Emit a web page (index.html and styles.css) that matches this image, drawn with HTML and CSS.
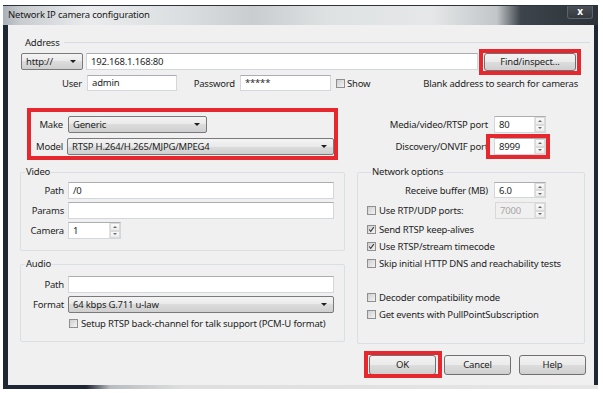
FILE: index.html
```html
<!DOCTYPE html>
<html lang="en">
<head>
    <meta charset="UTF-8">
    <title>Network IP camera configuration</title>
    <link rel="stylesheet" href="styles.css">
</head>
<body>
    <div class="window">
        <div class="titlebar">
            <span class="title">Network IP camera configuration</span>
            <span class="close">x</span>
        </div>

        <div class="client">
            <div class="addr-head">Address</div>

            <div class="addr-row">
                <div class="combo proto">http://</div>
                <div class="field url">192.168.1.168:80</div>
                <div class="btn find">Find/inspect...<span class="mark"></span></div>
            </div>

            <div class="login-row">
                <span class="lbl user-lbl">User</span>
                <div class="field user">admin</div>
                <span class="lbl pass-lbl">Password</span>
                <div class="field pass">*****</div>
                <span class="cb"></span>
                <span class="show">Show</span>
                <span class="hint">Blank address to search for cameras</span>
            </div>

            <div class="columns">
                <div class="col-left">
                    <div class="make-box">
                        <span class="lbl">Make</span>
                        <div class="combo make">Generic</div>
                        <span class="lbl">Model</span>
                        <div class="combo">RTSP H.264/H.265/MJPG/MPEG4</div>
                    </div>

                    <fieldset class="group video">
                        <legend>Video</legend>
                        <div class="form-grid">
                            <span class="lbl">Path</span>
                            <div class="field">/0</div>
                            <span class="lbl">Params</span>
                            <div class="field"></div>
                            <span class="lbl">Camera</span>
                            <div class="spin cam">
                                <span class="val">1</span>
                                <span class="arrows"><i class="up"></i><i class="down"></i></span>
                            </div>
                        </div>
                    </fieldset>

                    <fieldset class="group audio">
                        <legend>Audio</legend>
                        <div class="form-grid">
                            <span class="lbl">Path</span>
                            <div class="field"></div>
                            <span class="lbl">Format</span>
                            <div class="combo">64 kbps G.711 u-law</div>
                        </div>
                        <div class="check-row backchannel">
                            <span class="cb"></span>
                            <span>Setup RTSP back-channel for talk support (PCM-U format)</span>
                        </div>
                    </fieldset>
                </div>

                <div class="col-right">
                    <div class="port-grid">
                        <span class="lbl">Media/video/RTSP port</span>
                        <div class="spin">
                            <span class="val">80</span>
                            <span class="arrows"><i class="up"></i><i class="down"></i></span>
                        </div>
                        <span class="lbl">Discovery/ONVIF port</span>
                        <div class="spin">
                            <span class="val">8999</span>
                            <span class="arrows"><i class="up"></i><i class="down"></i></span>
                            <span class="mark mark-port"></span>
                        </div>
                    </div>

                    <fieldset class="group net">
                        <legend>Network options</legend>
                        <div class="port-grid buffer">
                            <span class="lbl">Receive buffer (MB)</span>
                            <div class="spin">
                                <span class="val">6.0</span>
                                <span class="arrows"><i class="up"></i><i class="down"></i></span>
                            </div>
                        </div>
                        <div class="check-row rtp">
                            <span class="cb"></span>
                            <span>Use RTP/UDP ports:</span>
                            <div class="spin disabled">
                                <span class="val">7000</span>
                                <span class="arrows"><i class="up"></i><i class="down"></i></span>
                            </div>
                        </div>
                        <div class="check-row first">
                            <span class="cb checked"><svg viewBox="0 0 9 9"><polyline points="1.5,4.5 3.5,6.8 7.5,1.5"/></svg></span>
                            <span>Send RTSP keep-alives</span>
                        </div>
                        <div class="check-row">
                            <span class="cb checked"><svg viewBox="0 0 9 9"><polyline points="1.5,4.5 3.5,6.8 7.5,1.5"/></svg></span>
                            <span>Use RTSP/stream timecode</span>
                        </div>
                        <div class="check-row">
                            <span class="cb"></span>
                            <span>Skip initial HTTP DNS and reachability tests</span>
                        </div>
                        <div class="check-row spaced">
                            <span class="cb"></span>
                            <span>Decoder compatibility mode</span>
                        </div>
                        <div class="check-row">
                            <span class="cb"></span>
                            <span>Get events with PullPointSubscription</span>
                        </div>
                    </fieldset>
                </div>
            </div>

            <div class="buttons">
                <div class="btn ok">OK<span class="mark mark-ok"></span></div>
                <div class="btn">Cancel</div>
                <div class="btn">Help</div>
            </div>
        </div>

        <div class="frame-bottom"></div>
    </div>
</body>
</html>
```

FILE: styles.css
```css
* {
    box-sizing: border-box;
}
body {
    margin: 0;
    background-color: #fff;
    font-family: "Noto Sans", "Open Sans", sans-serif;
    font-size: 9.5px;
    letter-spacing: -0.2px;
    color: #1e1e1e;
}
.window {
    width: 595px;
    margin: 5px 0 0 3px;
    padding: 0 4px 0 5px;
    background-color: #1f2634;
}
.titlebar {
    display: flex;
    height: 20px;
    margin: 0 -4px 0 -5px;
    padding-left: 5px;
    border-top: 1px solid #2b3240;
    background: linear-gradient(to right, #a9b0b6 0, #c9cdd0 3%, #e9ebec 14%, #dcdfe1 30%, #c9cdd0 42%, #dfe2e3 55%, #e5e7e8 72%, #c2c6c9 83%, #3d444b 87%, #2c3238 100%);
}
.title {
    line-height: 17px;
    color: #1a1a1a;
}
.close {
    margin-left: auto;
    margin-right: 5px;
    width: 26px;
    height: 13px;
    border: 1px solid #5c636a;
    border-top: none;
    border-radius: 0 0 3px 3px;
    background: linear-gradient(#4a5057, #33393f);
    color: #fff;
    font-weight: bold;
    font-size: 10px;
    line-height: 11px;
    text-align: center;
}
.client {
    height: 360px;
    padding: 10px 8px 0 9px;
    background-color: #f0f0f0;
}
.frame-bottom {
    height: 4px;
    margin: 0 -4px 0 -5px;
    background: linear-gradient(to right, #1f2634 0, #1f2634 14%, #b8bcc0 18%, #dedede 30%, #e6e6e6 100%);
}

/* controls */
.lbl {
    white-space: nowrap;
    text-align: right;
}
.field,
.combo,
.spin,
.btn {
    height: 17px;
    line-height: 15px;
    white-space: nowrap;
}
.field {
    padding-left: 4px;
    background-color: #fff;
    border: 1px solid #d3d7dc;
    border-top-color: #abadb3;
}
.combo {
    display: flex;
    align-items: center;
    padding-left: 4px;
    border: 1px solid #7a7a7a;
    border-radius: 2px;
    background: linear-gradient(#f4f4f4, #e9e9e9 50%, #dcdcdc 50%, #cfcfcf);
}
.combo::after {
    content: "";
    margin-left: auto;
    margin-right: 6px;
    border: 3px solid transparent;
    border-top: 3px solid #1e1e1e;
    border-bottom: none;
}
.btn {
    position: relative;
    height: 20px;
    line-height: 18px;
    text-align: center;
    border: 1px solid #707070;
    border-radius: 3px;
    background: linear-gradient(#f2f2f2, #ebebeb 50%, #dddddd 50%, #cfcfcf);
}
.spin {
    position: relative;
    display: flex;
    background-color: #fff;
    border: 1px solid #d3d7dc;
    border-top-color: #abadb3;
}
.spin .val {
    flex: 1;
    padding-left: 4px;
}
.spin .arrows {
    display: flex;
    flex-direction: column;
    width: 11px;
    border-left: 1px solid #e2e2e2;
}
.spin .arrows i {
    flex: 1;
    display: flex;
    align-items: center;
    justify-content: center;
    background: linear-gradient(#fafafa, #ececec);
    border: 1px solid #dadada;
}
.spin .arrows i::after {
    content: "";
    border: 2px solid transparent;
}
.spin .arrows .up::after {
    border-bottom: 2px solid #6b6b6b;
    border-top: none;
}
.spin .arrows .down::after {
    border-top: 2px solid #6b6b6b;
    border-bottom: none;
}
.spin.disabled {
    background-color: #f0f0f0;
    border-color: #d8d8d8;
    color: #a6a6a6;
}
.cb {
    flex: none;
    width: 9px;
    height: 9px;
    border: 1px solid #8e8f8f;
    background: linear-gradient(135deg, #cfcfcf, #f3f3f3);
}
.cb svg {
    display: block;
    width: 7px;
    height: 7px;
    fill: none;
    stroke: #3b3b3b;
    stroke-width: 1.4;
}
.mark {
    position: absolute;
    top: -5px;
    right: -6px;
    bottom: -5px;
    left: -6px;
    border: 4px solid #e6282e;
    pointer-events: none;
}

/* address */
.addr-head {
    display: flex;
    align-items: center;
    gap: 4px;
    height: 14px;
    margin: 0 -4px 0 8px;
}
.addr-head::after {
    content: "";
    flex: 1;
    border-top: 1px solid #d5dbe0;
}
.addr-row {
    display: flex;
    align-items: center;
    gap: 3px;
    height: 17px;
    margin: 4px 10px 0 4px;
}
.proto {
    width: 62px;
}
.url {
    flex: 1;
}
.find {
    width: 92px;
    height: 18px;
    line-height: 16px;
    margin-left: 3px;
}
.login-row {
    display: flex;
    align-items: center;
    height: 16px;
    margin: 5px 8px 0 4px;
}
.login-row .field {
    height: 16px;
    line-height: 14px;
}
.user-lbl {
    width: 61px;
    margin-right: 5px;
}
.user {
    width: 90px;
}
.pass-lbl {
    width: 58px;
    margin-right: 5px;
}
.pass {
    width: 91px;
}
.login-row .cb {
    margin: 0 2px 0 5px;
}
.hint {
    margin-left: auto;
}

/* columns */
.columns {
    display: grid;
    grid-template-columns: 328px 229px;
    column-gap: 12px;
}
.make-box {
    display: grid;
    grid-template-columns: 32px 1fr;
    column-gap: 5px;
    row-gap: 5px;
    align-items: center;
    margin: 17px 7px 0 10px;
    padding: 4px 0 1px 0;
    border: 4px solid #e6282e;
}
.make-box .combo:last-child {
    margin-left: -1px;
}
.make {
    width: 139px;
}
.group {
    margin: 0;
    padding: 0;
    min-width: 0;
    border: 1px solid #dadfe3;
    border-radius: 2px;
}
.group legend {
    margin-left: 4px;
    padding: 0 1px;
    line-height: 14px;
}
.video {
    margin: 5px 0 0 3px;
    padding: 3px 10px 11px 0;
}
.audio {
    margin: 6px 0 0 3px;
    padding: 5px 10px 11px 0;
}
.form-grid {
    display: grid;
    grid-template-columns: 43px 1fr;
    column-gap: 4px;
    row-gap: 3px;
    align-items: center;
}
.cam {
    width: 53px;
}
.check-row {
    display: flex;
    align-items: center;
    gap: 3px;
    height: 17px;
    white-space: nowrap;
}
.backchannel {
    height: 14px;
    margin: 3px 0 0 48px;
}

.port-grid {
    display: grid;
    grid-template-columns: 131px 52px;
    column-gap: 6px;
    row-gap: 5px;
    align-items: center;
}
.col-right > .port-grid {
    margin-top: 25px;
}
.mark-port {
    top: -5px;
    right: -5px;
    bottom: -5px;
    left: -9px;
}
.net {
    width: 228px;
    margin-top: 10px;
    padding: 3px 0 20px 9px;
}
.buffer {
    grid-template-columns: 121px 52px;
}
.buffer .spin {
    height: 16px;
}
.rtp {
    margin-top: 4px;
}
.rtp .spin {
    width: 51px;
    margin-left: auto;
    margin-right: 38px;
}
.check-row.first {
    margin-top: 2px;
}
.check-row.spaced {
    margin-top: 17px;
}

.buttons {
    display: flex;
    justify-content: flex-end;
    gap: 8px;
    margin-top: 11px;
}
.buttons .btn {
    width: 67px;
}
.mark-ok {
    top: -5px;
    right: -7px;
    bottom: -4px;
    left: -6px;
}
```
